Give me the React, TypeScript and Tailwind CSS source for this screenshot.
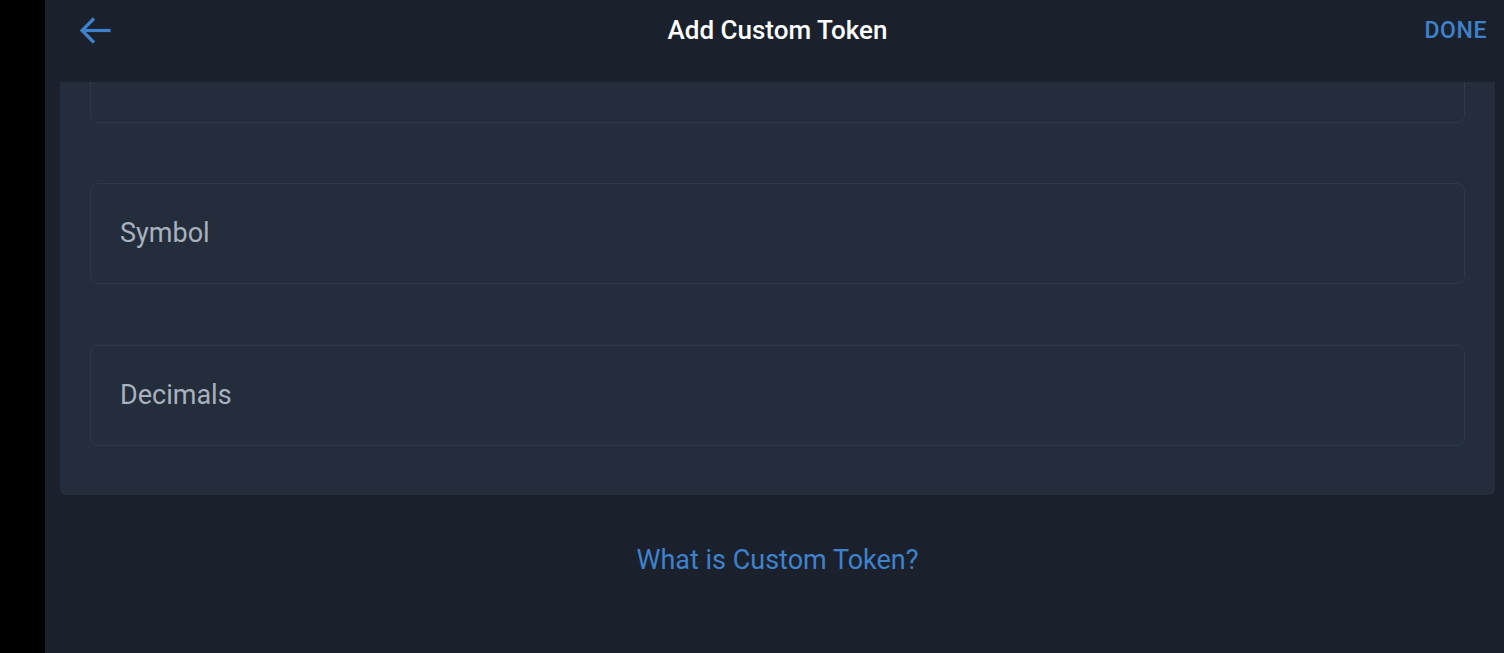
import React from 'react';

const Field: React.FC<{ label?: string; className?: string }> = ({ label, className = '' }) => (
  <div
    className={`h-[101px] rounded-lg border border-[#2e3948] bg-[#232d3b] flex items-center px-[29px] ${className}`}
  >
    {label && <span className="text-[27px] text-[#a8b1bd]">{label}</span>}
  </div>
);

export default function App() {
  return (
    <div
      className="flex h-[653px] w-[1504px] overflow-hidden bg-black"
      style={{ fontFamily: 'Roboto, "Noto Sans", sans-serif' }}
    >
      <div className="w-[45px] shrink-0 bg-black" />
      <div className="flex flex-1 flex-col bg-[#1b212c]">
        <header className="relative flex h-[82px] shrink-0 items-center justify-center pb-[22px]">
          <button className="absolute left-[33px] top-[15px] text-[#3f82cc]">
            <svg width="34" height="32" viewBox="0 0 34 32" fill="none" stroke="currentColor" strokeWidth="3.2" strokeLinecap="square">
              <path d="M31 15.5H5" />
              <path d="M16 3.5L4 15.5L16 27.5" strokeLinecap="butt" />
            </svg>
          </button>
          <h1 className="ml-[6px] text-[26px] font-medium text-white">Add Custom Token</h1>
          <button className="absolute right-[17px] top-[14px] text-[23px] font-medium tracking-wide text-[#3f82cc]">
            DONE
          </button>
        </header>
        <div className="flex flex-1 flex-col">
          <div className="ml-[15px] mr-[9px] h-[413px] overflow-hidden rounded-b-md bg-[#232d3b] px-[30px]">
            <Field className="mt-[-60px]" />
            <Field label="Symbol" className="mt-[60px]" />
            <Field label="Decimals" className="mt-[61px]" />
          </div>
          <div className="mt-[45px] pl-[6px] text-center text-[27px] text-[#3f82cc]">What is Custom Token?</div>
        </div>
      </div>
    </div>
  );
}
